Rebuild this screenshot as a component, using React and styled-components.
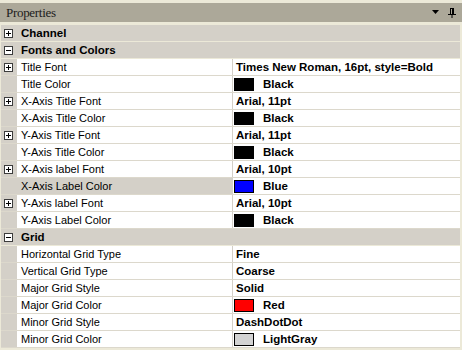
import React from 'react'
import styled, { createGlobalStyle } from 'styled-components'

const Global = createGlobalStyle`
  html, body { margin: 0; padding: 0; background: #ece9d8; }
  body { font-family: "Liberation Sans", Arial, sans-serif; }
`

const Panel = styled.div`
  width: 462px;
  height: 350px;
  background: #ece9d8;
  padding-top: 3px;
  box-sizing: border-box;
  overflow: hidden;
`

const TitleBar = styled.div`
  height: 19px;
  background: #aca899;
  display: flex;
  align-items: center;
  padding: 0 6px 0 6px;
  font-family: "Liberation Serif", "Times New Roman", serif;
  font-size: 13px;
  color: #1c1c1c;
  margin-bottom: 3px;
`

const Title = styled.span`
  flex: 1;
  letter-spacing: -0.3px;
`

const TitleIcons = styled.div`
  display: flex;
  align-items: center;
  gap: 8px;
`

const Grid = styled.div`
  margin: 0 2px 0 1px;
  display: flex;
  flex-direction: column;
`

const Row = styled.div`
  display: grid;
  grid-template-columns: 16px 215px 1px 1fr;
  height: 17px;
  box-sizing: border-box;
  border-bottom: 1px solid ${p => (p.category ? '#ece9d8' : '#dcd8cc')};
  background: ${p => (p.category ? '#d4d0c8' : '#ffffff')};
`

const Gutter = styled.div`
  background: #d4d0c8;
  display: flex;
  align-items: center;
  padding-left: 3px;
`

const Box = styled.div`
  width: 9px;
  height: 9px;
  box-sizing: border-box;
  border: 1px solid #3c3c3c;
  background: #fff;
  position: relative;
  &::before {
    content: '';
    position: absolute;
    left: 1px;
    top: 3px;
    width: 5px;
    height: 1px;
    background: #000;
  }
  &::after {
    content: '';
    position: absolute;
    left: 3px;
    top: 1px;
    width: 1px;
    height: 5px;
    background: #000;
    display: ${p => (p.open ? 'none' : 'block')};
  }
`

const Name = styled.div`
  display: flex;
  align-items: center;
  padding-left: 4px;
  font-size: 11px;
  color: #000;
  white-space: nowrap;
  background: ${p => (p.selected ? '#d4d0c8' : 'transparent')};
`

const CategoryName = styled.div`
  grid-column: 2 / 5;
  display: flex;
  align-items: center;
  padding-left: 4px;
  font-size: 11.5px;
  font-weight: bold;
  color: #000;
`

const Divider = styled.div`
  background: #d4d0c8;
`

const Value = styled.div`
  display: flex;
  align-items: center;
  padding-left: 3px;
  font-size: 11.5px;
  font-weight: bold;
  color: #000;
  white-space: nowrap;
`

const Swatch = styled.span`
  width: 20px;
  height: 13px;
  box-sizing: border-box;
  border: 1px solid #000;
  background: ${p => p.color};
  margin: 0 9px 0 -2px;
`

const sections = [
  { name: 'Channel', open: false, items: [] },
  {
    name: 'Fonts and Colors',
    open: true,
    items: [
      { name: 'Title Font', value: 'Times New Roman, 16pt, style=Bold', expand: true },
      { name: 'Title Color', value: 'Black', color: '#000000' },
      { name: 'X-Axis Title Font', value: 'Arial, 11pt', expand: true },
      { name: 'X-Axis Title Color', value: 'Black', color: '#000000' },
      { name: 'Y-Axis Title Font', value: 'Arial, 11pt', expand: true },
      { name: 'Y-Axis Title Color', value: 'Black', color: '#000000' },
      { name: 'X-Axis label Font', value: 'Arial, 10pt', expand: true },
      { name: 'X-Axis Label Color', value: 'Blue', color: '#0000ff', selected: true },
      { name: 'Y-Axis label Font', value: 'Arial, 10pt', expand: true },
      { name: 'Y-Axis Label Color', value: 'Black', color: '#000000' },
    ],
  },
  {
    name: 'Grid',
    open: true,
    items: [
      { name: 'Horizontal Grid Type', value: 'Fine' },
      { name: 'Vertical Grid Type', value: 'Coarse' },
      { name: 'Major Grid Style', value: 'Solid' },
      { name: 'Major Grid Color', value: 'Red', color: '#ff0000' },
      { name: 'Minor Grid Style', value: 'DashDotDot' },
      { name: 'Minor Grid Color', value: 'LightGray', color: '#d3d3d3' },
    ],
  },
]

function App() {
  return (
    <Panel>
      <Global />
      <TitleBar>
        <Title>Properties</Title>
        <TitleIcons>
          <svg width="8" height="5" viewBox="0 0 8 5">
            <path d="M0 0H7L3.5 4Z" fill="#000" />
          </svg>
          <svg width="8" height="10" viewBox="0 0 8 10">
            <path d="M2 0.5H6M2.5 0.5V6M5.5 0.5V6M0 6.5H8M4 6.5V10" stroke="#000" strokeWidth="1" fill="none" />
            <path d="M4.5 1V6" stroke="#000" strokeWidth="1" />
          </svg>
        </TitleIcons>
      </TitleBar>
      <Grid>
        {sections.map(s => (
          <React.Fragment key={s.name}>
            <Row category>
              <Gutter>
                <Box open={s.open} />
              </Gutter>
              <CategoryName>{s.name}</CategoryName>
            </Row>
            {s.items.map(it => (
              <Row key={it.name}>
                <Gutter>{it.expand && <Box />}</Gutter>
                <Name selected={it.selected}>{it.name}</Name>
                <Divider />
                <Value>
                  {it.color && <Swatch color={it.color} />}
                  {it.value}
                </Value>
              </Row>
            ))}
          </React.Fragment>
        ))}
      </Grid>
    </Panel>
  )
}

export default App
